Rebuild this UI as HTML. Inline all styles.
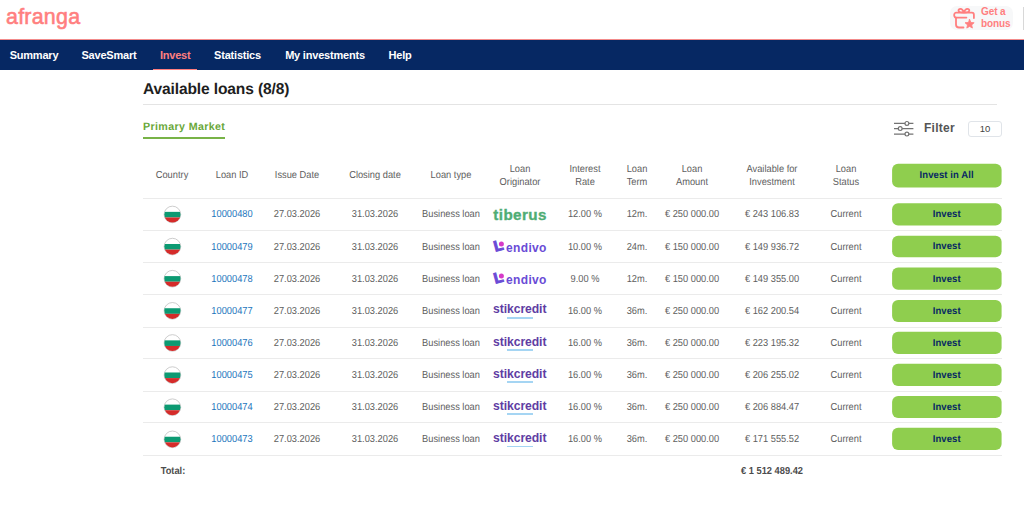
<!DOCTYPE html>
<html lang="en">
<head>
<meta charset="utf-8">
<title>afranga - Invest</title>
<style>
*{box-sizing:border-box;margin:0;padding:0}
html,body{width:1024px;height:507px;overflow:hidden;background:#fff}
body{font-family:"Liberation Sans",sans-serif;color:#555;position:relative}
.abs{position:absolute;white-space:nowrap}
#logo{left:6px;top:3px;font-size:21.4px;line-height:28px;font-weight:normal;-webkit-text-stroke:0.6px #ff7f7f;color:#ff7f7f;letter-spacing:0.25px}
#bonus{left:950px;top:6px;width:63px;height:24px;border-radius:7px;background:#f7f8f9}
#bonus svg{position:absolute;left:0;top:0}
#bonus .t{position:absolute;left:31px;top:0;font-size:10px;line-height:12px;font-weight:bold;color:#ff7f7f;letter-spacing:-0.1px}
#vbar{left:1023px;top:7px;width:1px;height:22.500px;background:#d8d8d8}
#nav{left:0;top:39px;width:1024px;height:31px;background:#062863;border-top:1px solid #f28b8b}
#nav a{transform:translate(-50%,-0.4px);letter-spacing:-0.2px;position:absolute;top:0;height:30px;line-height:30px;font-size:11px;font-weight:bold;color:#fff;text-decoration:none;white-space:nowrap}
#nav a.act{color:#ff7f7f}
#nav .ul{position:absolute;left:153px;top:28.500px;width:44px;height:1.500px;background:#ff7f7f}
#title{left:142.6px;top:79px;font-size:15.6px;line-height:20px;font-weight:bold;color:#1e1e1e;letter-spacing:-0.15px;transform-origin:0 50%;transform:skewX(0.1deg)}
#hr1{left:143px;top:104px;width:854px;height:1px;background:#e4e4e4}
#pm{left:142.8px;top:119.3px;font-size:10.7px;line-height:14px;font-weight:bold;color:#6aa83a;letter-spacing:0.36px;transform-origin:0 50%;transform:skewX(0.1deg)}
#pmul{left:143px;top:137px;width:82px;height:2px;background:#78b347}
#filter{left:924px;top:120px;font-size:12px;line-height:16px;font-weight:bold;color:#555;letter-spacing:0.25px}
#ficon{left:893px;top:120px}
#perpage{left:968px;top:121px;width:34px;height:16px;border:1px solid #e0e4e9;border-radius:3px;font-size:9.5px;line-height:13.2px;text-align:center;color:#444}
.hline{position:absolute;left:143px;width:858.5px;height:1px;background:#ebebeb}
.c{position:absolute;white-space:nowrap;font-size:10.2px;line-height:13px;color:#5e5e5e;text-align:center;transform:translateX(-50%) scaleX(0.912) skewX(0.1deg)}
.id{color:#1b75bc}
.btn{position:absolute;left:892.1px;width:109.4px;height:24px;color:#062863;font-size:10px;font-weight:bold;line-height:22.4px;text-align:center;letter-spacing:0.1px;transform:scaleX(0.95) skewX(0.1deg)}
.btn.r{height:22.2px;line-height:21.4px}
.flag{position:absolute;left:162px;width:20px;height:20px}
.c.b{font-weight:bold;color:#4c4c4c}
.lg{position:absolute;white-space:nowrap;height:20px;line-height:20px}
.tib{left:493.3px;margin-top:0.6px;font-size:15.2px;font-weight:bold;color:#4fad74;letter-spacing:0.42px;-webkit-text-stroke:0.35px #4fad74}
.len{left:488px;color:#6a4bd6;font-size:12px;font-weight:bold;letter-spacing:0.35px}
.len svg{position:absolute;left:0;top:0}
.len b{position:absolute;left:7.3px;top:2.2px;font-size:15px;line-height:15px;letter-spacing:0;transform:rotate(-15deg);transform-origin:30% 85%;-webkit-text-stroke:1px #6a4bd6}
.len span{position:absolute;left:18px;top:1.5px}
.stk{left:493px;margin-top:-1px;font-size:12.2px;font-weight:bold;color:#603da3;letter-spacing:-0.08px}
.stk i{position:absolute;left:14.200px;top:17.600px;width:25.500px;height:1.500px;background:#a5d5f3}
</style>
</head>
<body>
<div id="logo" class="abs">afranga</div>
<div id="bonus" class="abs">
<svg width="30" height="24" viewBox="0 0 30 24" fill="none" stroke="#ff7f7f" stroke-width="1.8" stroke-linecap="round" stroke-linejoin="round"><path d="M16.400 11.600H6.200a2 2 0 0 1-2-2V8.700a2 2 0 0 1 2-2h15.700a2 2 0 0 1 2 2v3.300"/><path d="M6 11.600v6.900a3 3 0 0 0 3 3h4.500"/><path d="M13.900 6.700c-.7-2.600-2-3.900-3.500-3.900-1.200 0-1.900.8-1.900 1.800 0 1.400 1.400 2.100 5.400 2.100zm0 0c.7-2.600 2-3.900 3.500-3.900 1.200 0 1.900.8 1.900 1.800 0 1.400-1.400 2.100-5.400 2.100z"/><path fill="#ff7f7f" stroke="#ff7f7f" stroke-width="0.8" d="M19.60 13.40 L20.89 16.42 L24.17 16.72 L21.69 18.88 L22.42 22.08 L19.60 20.40 L16.78 22.08 L17.51 18.88 L15.03 16.72 L18.31 16.42Z"/></svg>
<div class="t">Get a<br>bonus</div>
</div>
<div id="vbar" class="abs"></div>

<div id="nav" class="abs">
<a style="left:34px">Summary</a>
<a style="left:109px">SaveSmart</a>
<a class="act" style="left:175.2px">Invest</a>
<a style="left:237.5px">Statistics</a>
<a style="left:325px">My investments</a>
<a style="left:400px">Help</a>
<div class="ul"></div>
</div>

<div id="title" class="abs">Available loans (8/8)</div>
<div id="hr1" class="abs"></div>
<div id="pm" class="abs">Primary Market</div>
<div id="pmul" class="abs"></div>

<svg id="ficon" class="abs" width="22" height="18" viewBox="0 0 22 18" fill="#fff" stroke="#737373" stroke-width="1.200"><path d="M1 3.400h19.400M1 8.600h19.400M1 14.100h19.400"/><circle cx="13.900" cy="3.400" r="1.900"/><circle cx="7.200" cy="8.600" r="1.900"/><circle cx="13.900" cy="14.100" r="1.900"/></svg>
<div id="filter" class="abs">Filter</div>
<div id="perpage" class="abs">10</div>

<div id="tbl">
<svg class="abs" style="left:880px;top:150px" width="144" height="320" viewBox="0 0 144 320" fill="#8fce4e"><rect x="12.1" y="13.7" width="109.5" height="23.7" rx="6" ry="6"/><rect x="12.1" y="53.30" width="109.5" height="22.20" rx="6" ry="6"/><rect x="12.1" y="85.80" width="109.5" height="21.40" rx="6" ry="6"/><rect x="12.1" y="117.50" width="109.5" height="22.20" rx="6" ry="6"/><rect x="12.1" y="149.90" width="109.5" height="22.10" rx="6" ry="6"/><rect x="12.1" y="181.70" width="109.5" height="22.20" rx="6" ry="6"/><rect x="12.1" y="213.65" width="109.5" height="22.35" rx="6" ry="6"/><rect x="12.1" y="246.10" width="109.5" height="21.80" rx="6" ry="6"/><rect x="12.1" y="277.70" width="109.5" height="22.30" rx="6" ry="6"/></svg>
<div class="c" style="left:172.2px;top:168px">Country</div>
<div class="c" style="left:231.5px;top:168px">Loan ID</div>
<div class="c" style="left:297.2px;top:168px">Issue Date</div>
<div class="c" style="left:375px;top:168px">Closing date</div>
<div class="c" style="left:450.8px;top:168px">Loan type</div>
<div class="c" style="left:520px;top:162px">Loan<br>Originator</div>
<div class="c" style="left:584.6px;top:162px">Interest<br>Rate</div>
<div class="c" style="left:637.2px;top:162px">Loan<br>Term</div>
<div class="c" style="left:692.3px;top:162px">Loan<br>Amount</div>
<div class="c" style="left:771.8px;top:162px">Available for<br>Investment</div>
<div class="c" style="left:846.2px;top:162px">Loan<br>Status</div>
<div class="btn" style="top:164px">Invest in All</div>
<div class="hline" style="top:198px"></div>
<svg class="flag" style="top:204px" viewBox="0 0 20 20"><clipPath id="fc0"><circle cx="10.42" cy="10.46" r="8.100"/></clipPath><circle cx="10.42" cy="10.46" r="8.300" fill="#fff" stroke="#b8b8b8" stroke-width="0.700"/><g clip-path="url(#fc0)"><rect x="0" y="7.86" width="20" height="5.600" fill="#0c9a72"/><rect x="0" y="13.46" width="20" height="9" fill="#d52b2a"/></g></svg>
<div class="c id" style="left:231.5px;top:207px">10000480</div>
<div class="c" style="left:297.2px;top:207px">27.03.2026</div>
<div class="c" style="left:375px;top:207px">31.03.2026</div>
<div class="c" style="left:450.8px;top:207px">Business loan</div>
<div class="lg tib" style="top:204.06px">tiberus</div>
<div class="c" style="left:584.6px;top:207px">12.00 %</div>
<div class="c" style="left:637.2px;top:207px">12m.</div>
<div class="c" style="left:692.3px;top:207px">€ 250 000.00</div>
<div class="c" style="left:771.8px;top:207px">€ 243 106.83</div>
<div class="c" style="left:846.2px;top:207px">Current</div>
<div class="btn r" style="top:203.3px;height:22.2px;line-height:21.4px">Invest</div>
<div class="hline" style="top:230px"></div>
<svg class="flag" style="top:236px" viewBox="0 0 20 20"><clipPath id="fc1"><circle cx="10.42" cy="10.59" r="8.100"/></clipPath><circle cx="10.42" cy="10.59" r="8.300" fill="#fff" stroke="#b8b8b8" stroke-width="0.700"/><g clip-path="url(#fc1)"><rect x="0" y="7.99" width="20" height="5.600" fill="#0c9a72"/><rect x="0" y="13.59" width="20" height="9" fill="#d52b2a"/></g></svg>
<div class="c id" style="left:231.5px;top:240px">10000479</div>
<div class="c" style="left:297.2px;top:240px">27.03.2026</div>
<div class="c" style="left:375px;top:240px">31.03.2026</div>
<div class="c" style="left:450.8px;top:240px">Business loan</div>
<div class="lg len" style="top:236.19px"><b>L</b><svg width="20" height="20" viewBox="0 0 20 20"><circle cx="13.400" cy="7.900" r="2.500" fill="#d63ac8"/></svg><span>endivo</span></div>
<div class="c" style="left:584.6px;top:240px">10.00 %</div>
<div class="c" style="left:637.2px;top:240px">24m.</div>
<div class="c" style="left:692.3px;top:240px">€ 150 000.00</div>
<div class="c" style="left:771.8px;top:240px">€ 149 936.72</div>
<div class="c" style="left:846.2px;top:240px">Current</div>
<div class="btn r" style="top:235.8px;height:21.4px;line-height:20.6px">Invest</div>
<div class="hline" style="top:262px"></div>
<svg class="flag" style="top:268px" viewBox="0 0 20 20"><clipPath id="fc2"><circle cx="10.42" cy="10.71" r="8.100"/></clipPath><circle cx="10.42" cy="10.71" r="8.300" fill="#fff" stroke="#b8b8b8" stroke-width="0.700"/><g clip-path="url(#fc2)"><rect x="0" y="8.11" width="20" height="5.600" fill="#0c9a72"/><rect x="0" y="13.71" width="20" height="9" fill="#d52b2a"/></g></svg>
<div class="c id" style="left:231.5px;top:272px">10000478</div>
<div class="c" style="left:297.2px;top:272px">27.03.2026</div>
<div class="c" style="left:375px;top:272px">31.03.2026</div>
<div class="c" style="left:450.8px;top:272px">Business loan</div>
<div class="lg len" style="top:268.31px"><b>L</b><svg width="20" height="20" viewBox="0 0 20 20"><circle cx="13.400" cy="7.900" r="2.500" fill="#d63ac8"/></svg><span>endivo</span></div>
<div class="c" style="left:584.6px;top:272px">9.00 %</div>
<div class="c" style="left:637.2px;top:272px">12m.</div>
<div class="c" style="left:692.3px;top:272px">€ 150 000.00</div>
<div class="c" style="left:771.8px;top:272px">€ 149 355.00</div>
<div class="c" style="left:846.2px;top:272px">Current</div>
<div class="btn r" style="top:267.5px;height:22.2px;line-height:21.4px">Invest</div>
<div class="hline" style="top:294px"></div>
<svg class="flag" style="top:300px" viewBox="0 0 20 20"><clipPath id="fc3"><circle cx="10.42" cy="10.84" r="8.100"/></clipPath><circle cx="10.42" cy="10.84" r="8.300" fill="#fff" stroke="#b8b8b8" stroke-width="0.700"/><g clip-path="url(#fc3)"><rect x="0" y="8.24" width="20" height="5.600" fill="#0c9a72"/><rect x="0" y="13.84" width="20" height="9" fill="#d52b2a"/></g></svg>
<div class="c id" style="left:231.5px;top:304px">10000477</div>
<div class="c" style="left:297.2px;top:304px">27.03.2026</div>
<div class="c" style="left:375px;top:304px">31.03.2026</div>
<div class="c" style="left:450.8px;top:304px">Business loan</div>
<div class="lg stk" style="top:300.44px">stikcredit<i></i></div>
<div class="c" style="left:584.6px;top:304px">16.00 %</div>
<div class="c" style="left:637.2px;top:304px">36m.</div>
<div class="c" style="left:692.3px;top:304px">€ 250 000.00</div>
<div class="c" style="left:771.8px;top:304px">€ 162 200.54</div>
<div class="c" style="left:846.2px;top:304px">Current</div>
<div class="btn r" style="top:299.9px;height:22.1px;line-height:21.3px">Invest</div>
<div class="hline" style="top:327px"></div>
<svg class="flag" style="top:332px" viewBox="0 0 20 20"><clipPath id="fc4"><circle cx="10.42" cy="10.96" r="8.100"/></clipPath><circle cx="10.42" cy="10.96" r="8.300" fill="#fff" stroke="#b8b8b8" stroke-width="0.700"/><g clip-path="url(#fc4)"><rect x="0" y="8.36" width="20" height="5.600" fill="#0c9a72"/><rect x="0" y="13.96" width="20" height="9" fill="#d52b2a"/></g></svg>
<div class="c id" style="left:231.5px;top:336px">10000476</div>
<div class="c" style="left:297.2px;top:336px">27.03.2026</div>
<div class="c" style="left:375px;top:336px">31.03.2026</div>
<div class="c" style="left:450.8px;top:336px">Business loan</div>
<div class="lg stk" style="top:332.56px">stikcredit<i></i></div>
<div class="c" style="left:584.6px;top:336px">16.00 %</div>
<div class="c" style="left:637.2px;top:336px">36m.</div>
<div class="c" style="left:692.3px;top:336px">€ 250 000.00</div>
<div class="c" style="left:771.8px;top:336px">€ 223 195.32</div>
<div class="c" style="left:846.2px;top:336px">Current</div>
<div class="btn r" style="top:331.7px;height:22.2px;line-height:21.4px">Invest</div>
<div class="hline" style="top:358px"></div>
<svg class="flag" style="top:365px" viewBox="0 0 20 20"><clipPath id="fc5"><circle cx="10.42" cy="10.09" r="8.100"/></clipPath><circle cx="10.42" cy="10.09" r="8.300" fill="#fff" stroke="#b8b8b8" stroke-width="0.700"/><g clip-path="url(#fc5)"><rect x="0" y="7.49" width="20" height="5.600" fill="#0c9a72"/><rect x="0" y="13.09" width="20" height="9" fill="#d52b2a"/></g></svg>
<div class="c id" style="left:231.5px;top:368px">10000475</div>
<div class="c" style="left:297.2px;top:368px">27.03.2026</div>
<div class="c" style="left:375px;top:368px">31.03.2026</div>
<div class="c" style="left:450.8px;top:368px">Business loan</div>
<div class="lg stk" style="top:364.69px">stikcredit<i></i></div>
<div class="c" style="left:584.6px;top:368px">16.00 %</div>
<div class="c" style="left:637.2px;top:368px">36m.</div>
<div class="c" style="left:692.3px;top:368px">€ 250 000.00</div>
<div class="c" style="left:771.8px;top:368px">€ 206 255.02</div>
<div class="c" style="left:846.2px;top:368px">Current</div>
<div class="btn r" style="top:363.65px;height:22.4px;line-height:21.6px">Invest</div>
<div class="hline" style="top:391px"></div>
<svg class="flag" style="top:397px" viewBox="0 0 20 20"><clipPath id="fc6"><circle cx="10.42" cy="10.21" r="8.100"/></clipPath><circle cx="10.42" cy="10.21" r="8.300" fill="#fff" stroke="#b8b8b8" stroke-width="0.700"/><g clip-path="url(#fc6)"><rect x="0" y="7.61" width="20" height="5.600" fill="#0c9a72"/><rect x="0" y="13.21" width="20" height="9" fill="#d52b2a"/></g></svg>
<div class="c id" style="left:231.5px;top:400px">10000474</div>
<div class="c" style="left:297.2px;top:400px">27.03.2026</div>
<div class="c" style="left:375px;top:400px">31.03.2026</div>
<div class="c" style="left:450.8px;top:400px">Business loan</div>
<div class="lg stk" style="top:396.81px">stikcredit<i></i></div>
<div class="c" style="left:584.6px;top:400px">16.00 %</div>
<div class="c" style="left:637.2px;top:400px">36m.</div>
<div class="c" style="left:692.3px;top:400px">€ 250 000.00</div>
<div class="c" style="left:771.8px;top:400px">€ 206 884.47</div>
<div class="c" style="left:846.2px;top:400px">Current</div>
<div class="btn r" style="top:396.1px;height:21.8px;line-height:21.0px">Invest</div>
<div class="hline" style="top:422px"></div>
<svg class="flag" style="top:429px" viewBox="0 0 20 20"><clipPath id="fc7"><circle cx="10.42" cy="10.34" r="8.100"/></clipPath><circle cx="10.42" cy="10.34" r="8.300" fill="#fff" stroke="#b8b8b8" stroke-width="0.700"/><g clip-path="url(#fc7)"><rect x="0" y="7.74" width="20" height="5.600" fill="#0c9a72"/><rect x="0" y="13.34" width="20" height="9" fill="#d52b2a"/></g></svg>
<div class="c id" style="left:231.5px;top:432px">10000473</div>
<div class="c" style="left:297.2px;top:432px">27.03.2026</div>
<div class="c" style="left:375px;top:432px">31.03.2026</div>
<div class="c" style="left:450.8px;top:432px">Business loan</div>
<div class="lg stk" style="top:428.94px">stikcredit<i></i></div>
<div class="c" style="left:584.6px;top:432px">16.00 %</div>
<div class="c" style="left:637.2px;top:432px">36m.</div>
<div class="c" style="left:692.3px;top:432px">€ 250 000.00</div>
<div class="c" style="left:771.8px;top:432px">€ 171 555.52</div>
<div class="c" style="left:846.2px;top:432px">Current</div>
<div class="btn r" style="top:427.7px;height:22.3px;line-height:21.5px">Invest</div>
<div class="hline" style="top:455px"></div>
<div class="c b" style="left:172.5px;top:464px">Total:</div>
<div class="c b" style="left:771.8px;top:464px">€ 1 512 489.42</div>
</div>
</body>
</html>
